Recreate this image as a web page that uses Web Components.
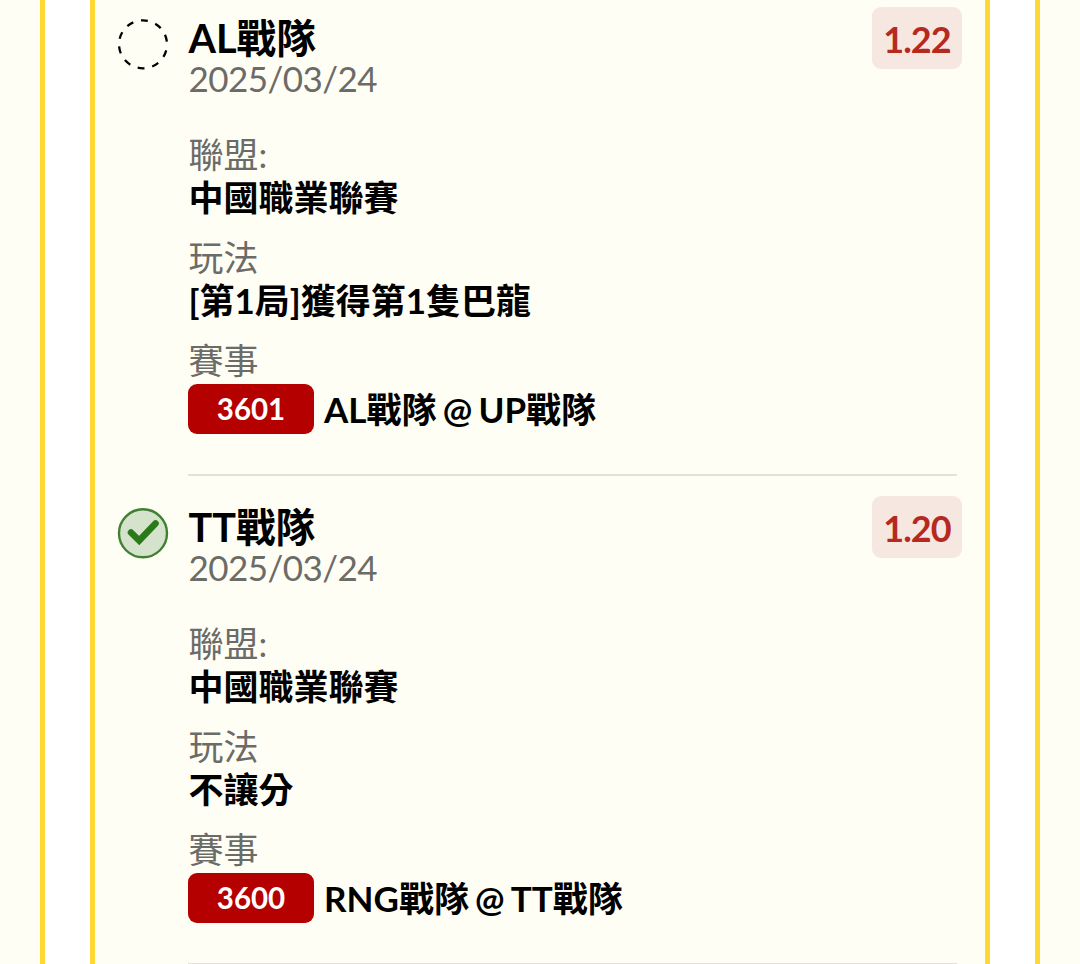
<!DOCTYPE html>
<html lang="zh-Hant">
<head>
<meta charset="UTF-8">
<title>注單明細</title>
<style>
  body {
    margin: 0;
    height: 964px;
    overflow: hidden;
    background: #fffef5;
    font-family: Lato, "Noto Sans CJK TC", sans-serif;
    color: #000;
  }
</style>
</head>
<body>
<bet-slip>
  <bet-item status="pending" odds="1.22" code="3601">
    <span slot="title">AL戰隊</span>
    <span slot="date">2025/03/24</span>
    <span slot="league">中國職業聯賽</span>
    <span slot="play">[第1局]獲得第1隻巴龍</span>
    <span slot="match">AL戰隊 @ UP戰隊</span>
  </bet-item>
  <bet-item status="won" odds="1.20" code="3600">
    <span slot="title">TT戰隊</span>
    <span slot="date">2025/03/24</span>
    <span slot="league">中國職業聯賽</span>
    <span slot="play">不讓分</span>
    <span slot="match">RNG戰隊 @ TT戰隊</span>
  </bet-item>
</bet-slip>

<script>
class BetSlip extends HTMLElement {
  connectedCallback() {
    this.attachShadow({ mode: 'open' });
    this.shadowRoot.innerHTML = `
      <style>
        :host {
          display: block;
          box-sizing: border-box;
          height: 964px;
          margin: 0 40px;
          padding: 0 45px;
          border: solid #ffd835;
          border-width: 0 5px;
          background: #fff;
        }
        .panel {
          box-sizing: border-box;
          height: 100%;
          overflow: hidden;
          border: solid #ffd835;
          border-width: 0 5px;
          background: #fffef5;
          padding: 0 23px;
        }
      </style>
      <div class="panel"><slot></slot></div>
    `;
  }
}

class StatusIcon extends HTMLElement {
  connectedCallback() {
    const icons = {
      pending: `<circle cx="25" cy="25.3" r="24" fill="none" stroke="#000" stroke-width="2.3" stroke-dasharray="7 7.87" stroke-dashoffset="-6.2"/>`,
      won: `<circle cx="25" cy="25.3" r="24" fill="#d5e3cd" stroke="#408033" stroke-width="2.4"/>
            <path d="M13 24.5 L21.2 32.5 L37.5 15.5" fill="none" stroke="#2a7a1a" stroke-width="6.6" stroke-linecap="round"/>`
    };
    this.attachShadow({ mode: 'open' });
    this.shadowRoot.innerHTML = `
      <style>
        :host { display: block; width: 50px; height: 50px; }
        svg { display: block; overflow: visible; }
      </style>
      <svg width="50" height="50" viewBox="0 0 50 50">${icons[this.getAttribute('name')]}</svg>
    `;
  }
}

class BetItem extends HTMLElement {
  connectedCallback() {
    this.attachShadow({ mode: 'open' });
    this.shadowRoot.innerHTML = `
      <style>
        :host {
          display: flex;
          align-items: flex-start;
          height: 489px;
        }
        :host(:first-child) { margin-top: -13px; }
        status-icon { margin-top: 32px; }
        .content {
          flex: 1;
          box-sizing: border-box;
          height: 489px;
          margin-left: 20px;
          margin-right: 5px;
          padding-top: 20px;
          border-bottom: 2px solid #e3e1da;
          font-size: 35px;
          line-height: 43px;
          white-space: nowrap;
        }
        .head {
          display: flex;
          justify-content: space-between;
          align-items: flex-start;
          height: 126px;
          margin-right: -5px;
        }
        .name { margin-top: 10px; }
        .title { font-size: 39.6px; line-height: 42px; height: 40px; font-weight: 700; padding-left: 0.5px; }
        .date, .label { color: #6b6b67; }
        .date { letter-spacing: -0.55px; padding-left: 0.5px; }
        .label { padding-left: 0.5px; }
        .odds {
          width: 90px;
          height: 62px;
          border-radius: 9px;
          background: #f7e7e1;
          color: #b5291f;
          font-size: 36px;
          line-height: 64px;
          font-weight: 700;
          letter-spacing: -0.9px;
          text-align: center;
        }
        .value { font-weight: 700; height: 43px; padding-left: 0.5px; }
        .field { height: 86px; margin-bottom: 17px; }
        .match {
          display: flex;
          align-items: center;
          gap: 10px;
          height: 50px;
          margin-top: 2px;
          font-weight: 700;
          word-spacing: -2.3px;
        }
        .code {
          width: 126px;
          height: 50px;
          border-radius: 9px;
          background: #b50000;
          color: #fff;
          font-size: 29.5px;
          line-height: 50px;
          font-weight: 700;
          text-align: center;
        }
      </style>
      <status-icon name="${this.getAttribute('status')}"></status-icon>
      <div class="content">
        <div class="head">
          <div class="name">
            <div class="title"><slot name="title"></slot></div>
            <div class="date"><slot name="date"></slot></div>
          </div>
          <div class="odds">${this.getAttribute('odds')}</div>
        </div>
        <div class="field">
          <div class="label">聯盟:</div>
          <div class="value"><slot name="league"></slot></div>
        </div>
        <div class="field">
          <div class="label">玩法</div>
          <div class="value"><slot name="play"></slot></div>
        </div>
        <div class="label">賽事</div>
        <div class="match">
          <div class="code">${this.getAttribute('code')}</div>
          <slot name="match"></slot>
        </div>
      </div>
    `;
  }
}

customElements.define('bet-slip', BetSlip);
customElements.define('status-icon', StatusIcon);
customElements.define('bet-item', BetItem);
</script>
</body>
</html>
